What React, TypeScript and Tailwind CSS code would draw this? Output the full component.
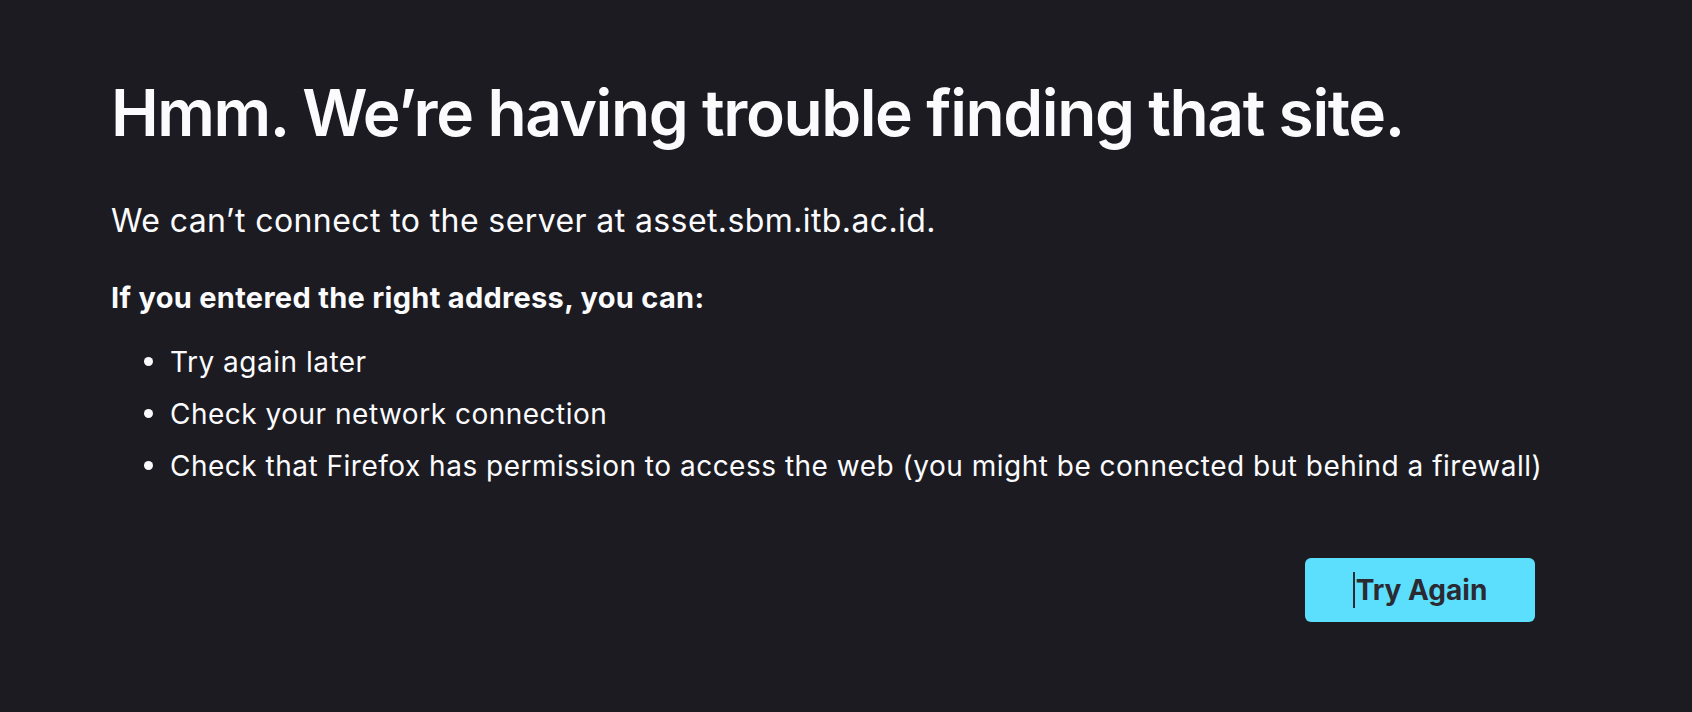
export default function App() {
  const items = [
    "Try again later",
    "Check your network connection",
    "Check that Firefox has permission to access the web (you might be connected but behind a firewall)",
  ];

  return (
    <div
      className="min-h-[712px] w-full bg-[#1c1b22] text-[#fbfbfe]"
      style={{ fontFamily: 'Inter, "Noto Sans", sans-serif' }}
    >
      <div className="flex w-[1600px] flex-col pl-[111px] pr-[65px] pt-[81px]">
        <h1 className="whitespace-nowrap text-[64px] font-semibold leading-none tracking-[-1.4px]">
          Hmm. We’re having trouble finding that site.
        </h1>
        <p className="mt-[60px] text-[32px] leading-none tracking-[0.4px]">
          We can’t connect to the server at asset.sbm.itb.ac.id.
        </p>
        <p className="mt-[46px] text-[29px] font-bold leading-none tracking-[0.3px]">
          If you entered the right address, you can:
        </p>
        <ul className="mt-[36px] flex flex-col gap-[24px] pl-[59px] text-[28px] leading-none tracking-[0.5px]">
          {items.map((item) => (
            <li key={item} className="relative whitespace-nowrap">
              <span className="absolute left-[-26px] top-[9px] h-[9px] w-[9px] rounded-full bg-[#fbfbfe]" />
              {item}
            </li>
          ))}
        </ul>
        <div className="mt-[78px] flex justify-end">
          <button className="flex h-[64px] w-[230px] items-center justify-center rounded-[6px] bg-[#5cdffd] text-[28px] font-bold text-[#2b2a33]">
            <span className="mr-[1px] h-[36px] w-[2px] bg-[#2b2a33]" />
            Try Again
          </button>
        </div>
      </div>
    </div>
  );
}
